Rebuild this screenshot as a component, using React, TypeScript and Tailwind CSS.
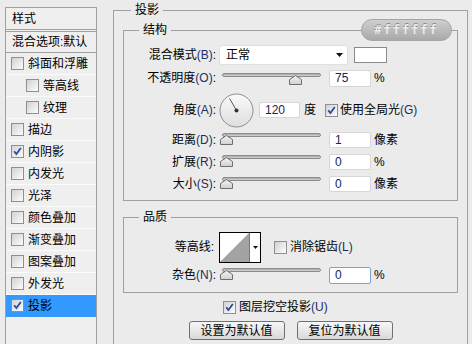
import React from "react";

const FONT = "font-['Liberation_Sans','Noto_Sans_CJK_SC',sans-serif]";

function Check(props: { checked?: boolean }) {
    return (
        <span className="relative inline-block w-[13px] h-[13px] shrink-0 border border-[#8f8f8f] bg-linear-to-br from-[#d2d2d2] to-[#fdfdfd]">
            {props.checked && (
                <svg className="absolute inset-0" width="11" height="11" viewBox="0 0 11 11">
                    <path d="M2.2 5.2 L4.4 8 L8.8 2" stroke="#2b4b9e" strokeWidth="1.8" fill="none" />
                </svg>
            )}
        </span>
    );
}

function Slider(props: { pos: number }) {
    return (
        <div className="relative w-[101px] h-[12px] shrink-0">
            <div className="ml-[2px] h-[4px] rounded-full border border-[#8c8c8c] bg-linear-to-b from-[#a8a8a8] to-[#d6d6d6]" />
            <svg className="absolute top-[2px]" style={{ left: props.pos }} width="13" height="10" viewBox="0 0 13 10">
                <defs>
                    <linearGradient id="th" x1="0" y1="0" x2="0" y2="1">
                        <stop offset="0" stopColor="#f4f4f4" />
                        <stop offset="1" stopColor="#cfcfcf" />
                    </linearGradient>
                </defs>
                <path d="M6.5 0.5 L12.5 4.5 L12.5 9.5 L0.5 9.5 L0.5 4.5 Z" fill="url(#th)" stroke="#6e6e6e" />
            </svg>
        </div>
    );
}

function Field(props: { value: string; w: number; h: number; focus?: boolean }) {
    return (
        <div
            className={`flex items-center pl-[5px] bg-white rounded-[2px] border text-[#16245c] shrink-0 ${props.focus ? "border-[#7ba2d0]" : "border-[#d6d6d6]"}`}
            style={{ width: props.w, height: props.h }}
        >
            {props.value}
        </div>
    );
}

function Label(props: { cn: string; en?: string }) {
    return (
        <div className="w-[92px] shrink-0 text-right whitespace-nowrap">
            {props.cn}
            {props.en && <span className="text-[#1d2d62]">{props.en}</span>}
            <span>:</span>
        </div>
    );
}

const styles = [
    { name: "斜面和浮雕", indent: false, checked: false },
    { name: "等高线", indent: true, checked: false },
    { name: "纹理", indent: true, checked: false },
    { name: "描边", indent: false, checked: false },
    { name: "内阴影", indent: false, checked: true },
    { name: "内发光", indent: false, checked: false },
    { name: "光泽", indent: false, checked: false },
    { name: "颜色叠加", indent: false, checked: false },
    { name: "渐变叠加", indent: false, checked: false },
    { name: "图案叠加", indent: false, checked: false },
    { name: "外发光", indent: false, checked: false },
    { name: "投影", indent: false, checked: true, active: true },
];

export default function App() {
    return (
        <div className={`relative flex w-[472px] h-[344px] overflow-hidden bg-[#ebebeb] text-[12px] leading-[16px] text-black ${FONT}`}>
            {/* left list */}
            <div className="ml-[5px] mt-[7px] w-[92px] shrink-0 border border-b-0 border-[#a0a0a0] bg-[#efefef]">
                <div className="h-[22px] pl-[6px] flex items-center border-b border-[#a0a0a0]">样式</div>
                <div className="mt-[1px] h-[22px] pl-[6px] flex items-center border-y border-[#a0a0a0] whitespace-nowrap">混合选项:默认</div>
                {styles.map((s) => (
                    <div
                        key={s.name}
                        className={`h-[22px] flex items-center gap-[4px] border-b ${s.active ? "bg-[#3399ff] border-[#3399ff]" : "border-[#fbfbfb]"} ${s.indent ? "pl-[20px]" : "pl-[5px]"}`}
                    >
                        <Check checked={s.checked} />
                        <span>{s.name}</span>
                    </div>
                ))}
            </div>

            {/* right panel */}
            <fieldset className="ml-[16px] mt-[2px] w-[355px] shrink-0 border border-b-0 border-[#a0a0a0] pb-[20px]">
                <legend className="ml-[17px] px-[4px]">投影</legend>

                <fieldset className="mx-[9px] mt-[4px] border border-[#a0a0a0] pt-[7px] pb-[7px]">
                    <legend className="ml-[15px] px-[4px]">结构</legend>

                    <div className="h-[20px] flex items-center">
                        <Label cn="混合模式" en="(B)" />
                        <div className="ml-[3px] w-[129px] h-[20px] flex items-center justify-between pl-[6px] pr-[4px] bg-white rounded-[3px] border border-[#e0e0e0]">
                            <span>正常</span>
                            <svg width="7" height="4" viewBox="0 0 7 4"><path d="M0 0 L7 0 L3.5 4 Z" fill="#111" /></svg>
                        </div>
                        <div className="ml-[6px] w-[33px] h-[16px] bg-white border border-[#8a8a8a]" />
                    </div>

                    <div className="mt-[4px] h-[18px] flex items-center">
                        <Label cn="不透明度" en="(O)" />
                        <div className="ml-[4px] mt-[1px]"><Slider pos={69} /></div>
                        <div className="ml-[8px]"><Field value="75" w={42} h={17} /></div>
                        <span className="ml-[3px]">%</span>
                    </div>

                    <div className="mt-[5px] h-[36px] flex items-center">
                        <Label cn="角度" en="(A)" />
                        <svg className="ml-[3px] shrink-0" width="35" height="35" viewBox="0 0 35 35">
                            <defs>
                                <linearGradient id="dial" x1="0" y1="0" x2="0" y2="1">
                                    <stop offset="0" stopColor="#fafafa" />
                                    <stop offset="1" stopColor="#dedede" />
                                </linearGradient>
                            </defs>
                            <circle cx="17.5" cy="17.5" r="16.5" fill="url(#dial)" stroke="#8c8c8c" />
                            <line x1="17.5" y1="17.5" x2="10.5" y2="5.4" stroke="#555" strokeWidth="1" />
                            <circle cx="17.5" cy="17.5" r="2" fill="#333" />
                        </svg>
                        <div className="ml-[5px]"><Field value="120" w={41} h={16} /></div>
                        <span className="ml-[4px]">度</span>
                        <div className="ml-[9px] flex items-center gap-[2px] whitespace-nowrap">
                            <Check checked />
                            <span>使用全局光<span className="text-[#1d2d62]">(G)</span></span>
                        </div>
                    </div>

                    {[
                        { cn: "距离", en: "(D)", v: "1", u: "像素" },
                        { cn: "扩展", en: "(R)", v: "0", u: "%" },
                        { cn: "大小", en: "(S)", v: "0", u: "像素" },
                    ].map((r, i) => (
                        <div key={r.cn} className={`h-[18px] flex items-center ${i === 0 ? "mt-[3px]" : "mt-[4px]"}`}>
                            <Label cn={r.cn} en={r.en} />
                            <div className="ml-[4px] -mt-[2px]"><Slider pos={0} /></div>
                            <div className="ml-[8px]"><Field value={r.v} w={42} h={16} /></div>
                            <span className="ml-[3px]">{r.u}</span>
                        </div>
                    ))}
                </fieldset>

                <fieldset className="mx-[9px] mt-[8px] border border-[#a0a0a0] pt-[7px] pb-[8px]">
                    <legend className="ml-[15px] px-[4px]">品质</legend>

                    <div className="h-[30px] flex items-center">
                        <div className="w-[90px] shrink-0 text-right">等高线:</div>
                        <div className="ml-[5px] w-[42px] h-[31px] flex border border-black bg-white">
                            <svg width="29" height="29" viewBox="0 0 29 29">
                                <path d="M0 29 L29 0 L29 29 Z" fill="#a3a3a3" />
                            </svg>
                            <div className="flex-1 flex items-center justify-center border-l border-[#777]">
                                <svg width="5" height="3" viewBox="0 0 5 3"><path d="M0 0 L5 0 L2.5 3 Z" fill="#111" /></svg>
                            </div>
                        </div>
                        <div className="ml-[13px] flex items-center gap-[3px] whitespace-nowrap">
                            <Check />
                            <span>消除锯齿<span className="text-[#1d2d62]">(L)</span></span>
                        </div>
                    </div>

                    <div className="mt-[4px] h-[18px] flex items-center">
                        <Label cn="杂色" en="(N)" />
                        <div className="ml-[4px] -mt-[2px]"><Slider pos={0} /></div>
                        <div className="ml-[8px]"><Field value="0" w={42} h={17} focus /></div>
                        <span className="ml-[3px]">%</span>
                    </div>
                </fieldset>

                <div className="mt-[6px] ml-[109px] flex items-center gap-[3px] whitespace-nowrap">
                    <Check checked />
                    <span>图层挖空投影<span className="text-[#1d2d62]">(U)</span></span>
                </div>

                <div className="mt-[6px] flex justify-center gap-[12px]">
                    {["设置为默认值", "复位为默认值"].map((b) => (
                        <div
                            key={b}
                            className="w-[96px] h-[19px] flex items-center justify-center rounded-[3px] border border-[#707070] bg-linear-to-b from-[#f7f7f7] to-[#d9d9d9]"
                        >
                            {b}
                        </div>
                    ))}
                </div>
            </fieldset>

            {/* colour badge over the group border */}
            <div className="absolute left-[361px] top-[19px] w-[91px] h-[22px] flex items-center justify-center rounded-full border border-[#a5a5a5] bg-linear-to-b from-[#cfcfcf] to-[#a9a9a9]">
                <span className="font-['DejaVu_Sans_Mono',monospace] font-bold text-[12px] tracking-[2px] text-[#ededed] [text-shadow:0_-1px_0_#8a8a8a]">#ffffff</span>
            </div>
        </div>
    );
}
